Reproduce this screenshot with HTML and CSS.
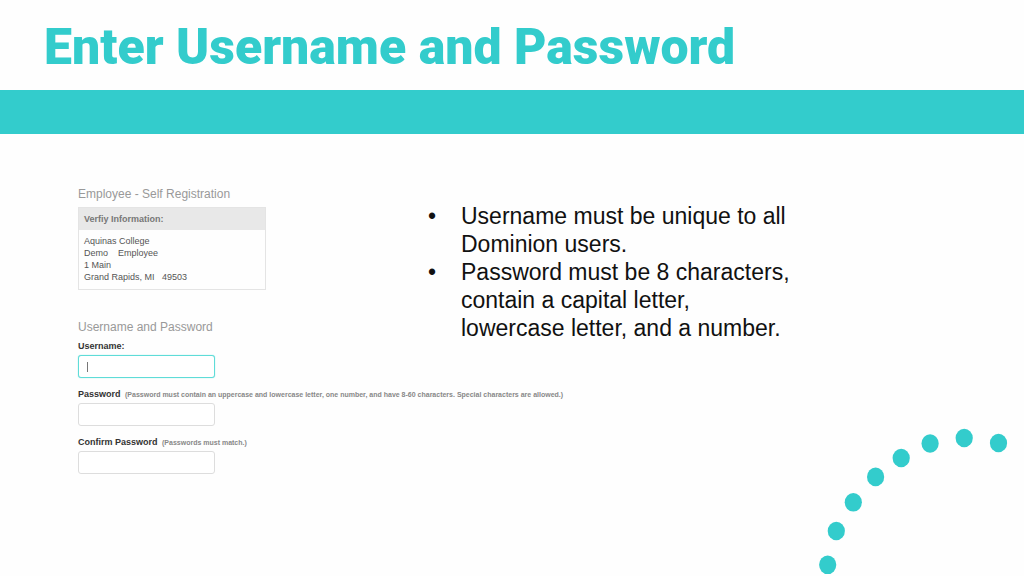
FILE: index.html
```html
<!DOCTYPE html>
<html lang="en">
<head>
    <meta charset="UTF-8">
    <meta name="viewport" content="width=device-width, initial-scale=1.0">
    <title>Enter Username and Password</title>
    <link rel="stylesheet" href="styles.css">
</head>
<body>
    <header>
        <h1>Enter Username and Password</h1>
        <div class="band"></div>
    </header>

    <main class="content">
        <div class="registration">
            <h2>Employee - Self Registration</h2>
            <section class="card">
                <h3>Verfiy Information:</h3>
                <address>
                    Aquinas College<br>
                    Demo &nbsp;&nbsp; Employee<br>
                    1 Main<br>
                    Grand Rapids, MI &nbsp; 49503
                </address>
            </section>

            <h2>Username and Password</h2>
            <form id="registration-form">
                <div class="field">
                    <label for="username">Username:</label>
                    <input type="text" id="username" name="username" class="active">
                </div>
                <div class="field">
                    <label for="password">Password <small>(Password must contain an uppercase and lowercase letter, one number, and have 8-60 characters. Special characters are allowed.)</small></label>
                    <input type="password" id="password" name="password">
                </div>
                <div class="field">
                    <label for="confirm">Confirm Password <small>(Passwords must match.)</small></label>
                    <input type="password" id="confirm" name="confirm">
                </div>
            </form>
        </div>

        <ul class="notes">
            <li>Username must be unique to all Dominion users.</li>
            <li>Password must be 8 characters, contain a capital letter, lowercase letter, and a number.</li>
        </ul>
    </main>

    <!-- Dotted arc in the corner -->
    <svg class="dots" width="210" height="150" viewBox="0 0 210 150" aria-hidden="true">
        <ellipse cx="13.7" cy="138.8" rx="8.6" ry="9.3"/>
        <ellipse cx="22.3" cy="105" rx="8.6" ry="9.3"/>
        <ellipse cx="39.3" cy="76.3" rx="8.6" ry="9.3"/>
        <ellipse cx="61.6" cy="50.9" rx="8.6" ry="9.3"/>
        <ellipse cx="87.2" cy="32" rx="8.6" ry="9.3"/>
        <ellipse cx="116.1" cy="17.5" rx="8.6" ry="9.3"/>
        <ellipse cx="150.2" cy="12" rx="8.6" ry="9.3"/>
        <ellipse cx="184.5" cy="17" rx="8.6" ry="9.3"/>
    </svg>
</body>
</html>
```
FILE: styles.css
```css
/* General body styling */
* {
    box-sizing: border-box;
}

body {
    font-family: "Liberation Sans", Arial, sans-serif;
    background-color: #fefefe;
    color: #111111;
    margin: 0;
    min-height: 100vh;
    position: relative;
}

/* Title and the band below it */
h1 {
    font-family: Roboto, sans-serif;
    font-size: 50px;
    font-weight: 900;
    line-height: 60px;
    color: #33cccc;
    margin: 0;
    padding: 17px 44px 13px;
}

.band {
    background-color: #33cccc;
    height: 44px;
}

/* Form on the left, notes on the right */
.content {
    display: grid;
    grid-template-columns: 350px minmax(0, 370px);
    padding: 52px 78px 40px;
}

h2 {
    font-size: 12px;
    font-weight: normal;
    line-height: 16px;
    color: #999999;
    margin: 0 0 5px;
}

/* Information card */
.card {
    width: 188px;
    border: 1px solid #e4e4e4;
    margin-bottom: 29px;
}

.card h3 {
    background-color: #e8e8e8;
    color: #777777;
    font-size: 9px;
    line-height: 22px;
    margin: 0;
    padding: 0 5px;
}

.card address {
    font-size: 9px;
    font-style: normal;
    line-height: 12px;
    color: #555555;
    padding: 5px 5px 6px;
}

/* Form fields */
.field {
    margin-bottom: 10px;
}

label {
    display: block;
    font-size: 9px;
    font-weight: bold;
    line-height: 12px;
    color: #333333;
    white-space: nowrap;
    margin-bottom: 3px;
}

label small {
    font-size: 7px;
    line-height: 1;
    color: #888888;
    margin-left: 2px;
}

input {
    display: block;
    width: 137px;
    height: 23px;
    padding: 0 8px;
    border: 1px solid #dddddd;
    border-radius: 3px;
    background-color: #ffffff;
    font-size: 9px;
    outline: none;
}

input.active {
    border-color: #5fdcd8;
    box-shadow: 0 0 1px #5fdcd8;
    background: linear-gradient(#777777, #777777) 8px 6px / 1px 10px no-repeat #ffffff;
}

/* Notes */
.notes {
    margin: 16px 0 0;
    padding: 0 0 0 33px;
    list-style: none;
    font-size: 23px;
    line-height: 28px;
}

.notes li::before {
    content: "•";
    float: left;
    margin-left: -33px;
}

.dots {
    position: absolute;
    right: 0;
    bottom: 0;
    fill: #33cccc;
}
```
